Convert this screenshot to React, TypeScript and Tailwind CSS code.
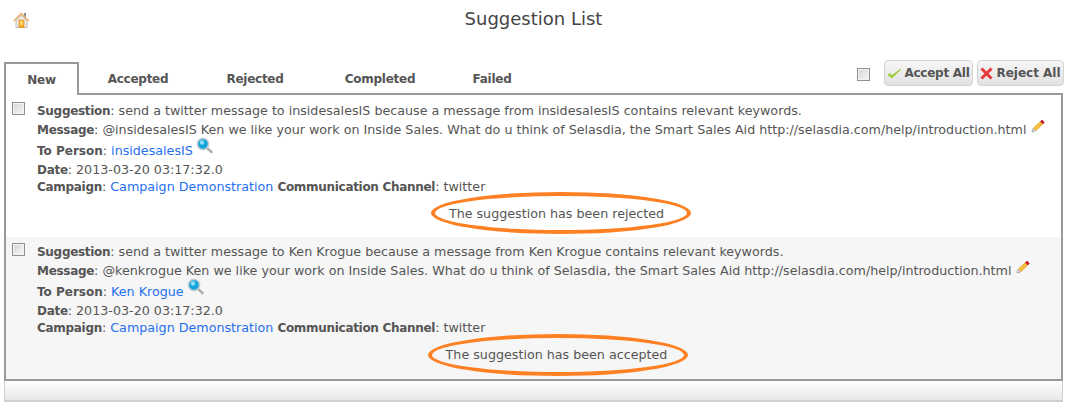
import type { ReactNode } from "react";

function HomeIcon() {
  return (
    <svg width="17" height="17" viewBox="0 0 17 17">
      <rect x="11" y="1" width="2" height="5" fill="#8c8c8c" />
      <path d="M3 8.5 V15.5 H14 V8.5 L8.5 3.5 Z" fill="#eeeeee" stroke="#b9b9b9" />
      <path d="M0.8 9 L8.3 1.6 L16 9" fill="none" stroke="#e8b26a" strokeWidth="1.5" />
      <rect x="6" y="8" width="5" height="7.5" fill="#f5a623" stroke="#e8a33a" />
      <rect x="7" y="9" width="3" height="4" fill="#fdd86a" />
    </svg>
  );
}

function SearchIcon() {
  return (
    <svg width="17" height="17" viewBox="0 0 17 17">
      <path d="M10.5 10.5 L15.5 15" stroke="#b0b0b0" strokeWidth="2.6" strokeLinecap="round" />
      <circle cx="7" cy="7" r="5.6" fill="#12a5dc" stroke="#c4cdd2" strokeWidth="1.6" />
      <circle cx="6" cy="5.5" r="2.2" fill="#8fdcf5" />
    </svg>
  );
}

function PencilIcon() {
  return (
    <svg width="14" height="14" viewBox="0 0 14 14">
      <path d="M1 13 L2 9.5 L4.5 12 Z" fill="#eeeeee" stroke="#999999" strokeWidth="0.8" />
      <path d="M2.5 9 L9.5 2.5 L11.8 5 L5 11.5 Z" fill="#f6bf3c" stroke="#d99a22" strokeWidth="0.7" />
      <path d="M9.5 2.5 L11 1 L13.2 3.3 L11.8 5 Z" fill="#d8112a" stroke="#b00d20" strokeWidth="0.6" />
    </svg>
  );
}

function Box() {
  return (
    <span className="block h-[13px] w-[13px] border border-[#8f8f8f] bg-gradient-to-br from-[#d5d5d5] to-[#f8f8f8] shadow-[inset_0_0_0_1px_#f4f4f4]" />
  );
}

function Label({ children }: { children: ReactNode }) {
  return <b className="text-[12px] font-bold tracking-[-0.3px] text-[#555]">{children}</b>;
}

function A({ children }: { children: ReactNode }) {
  return <span className="text-[#1f6fef]">{children}</span>;
}

function Suggestion({
  person,
  handle,
  status,
  shaded,
  ringClass,
}: {
  person: string;
  handle: string;
  status: string;
  shaded?: boolean;
  ringClass: string;
}) {
  return (
    <div className={`flex gap-[12px] pl-[6px] pt-[6px] ${shaded ? "flex-1 bg-[#f6f6f6]" : "h-[141px] bg-white"}`}>
      <div>
        <Box />
      </div>
      <div className="min-w-0 flex-1 text-[12.7px]">
        <div className="h-[18px] leading-[17px]">
          <Label>Suggestion</Label>: send a twitter message to {person} because a message from {person} contains relevant keywords.
        </div>
        <div className="flex h-[21px] items-start leading-[19px]">
          <span>
            <Label>Message</Label>: @{handle} Ken we like your work on Inside Sales. What do u think of Selasdia, the Smart Sales Aid http://selasdia.com/help/introduction.html
          </span>
          <span className="ml-[5px] mt-[-1px]">
            <PencilIcon />
          </span>
        </div>
        <div className="flex h-[19px] items-start leading-[19px]">
          <span>
            <b className="text-[12px] font-bold text-[#555]">To Person</b>: <A>{person}</A>
          </span>
          <span className="ml-[3px] mt-[-4px]">
            <SearchIcon />
          </span>
        </div>
        <div className="h-[18px] leading-[19px]">
          <Label>Date</Label>: 2013-03-20 03:17:32.0
        </div>
        <div className="h-[18px] leading-[17px]">
          <Label>Campaign</Label>: <A>Campaign Demonstration</A> <Label>Communication Channel</Label>: twitter
        </div>
        <div className="relative mt-[8px] h-[20px] pl-[15px] text-center leading-[20px]">
          {status}
          <span className={`absolute rounded-[50%] border-[4px] border-[#ff8022] ${ringClass}`} />
        </div>
      </div>
    </div>
  );
}

export default function App() {
  return (
    <div className="h-[408px] w-[1067px] overflow-hidden bg-white font-['DejaVu_Sans','Verdana',sans-serif] text-[12px] text-[#555]">
      <div className="relative flex h-[62px] justify-center pt-[9px]">
        <span className="absolute left-[13px] top-[12px]">
          <HomeIcon />
        </span>
        <h1 className="text-[18px] leading-[20px] text-[#444]">Suggestion List</h1>
      </div>

      <div className="mx-[4px] flex h-[33px] items-stretch">
        <div className="flex h-[33px] w-[75px] items-center justify-center border-2 border-b-0 border-[#999] pt-[1px] text-[12px] font-bold tracking-[-0.25px]">
          New
        </div>
        <div className="flex flex-1 border-b-[2px] border-[#999] font-bold tracking-[-0.25px]">
          <div className="flex h-[31px] w-[118px] items-center justify-center pt-[2px]">Accepted</div>
          <div className="ml-[-1px] flex h-[31px] w-[118px] items-center justify-center pt-[2px]">Rejected</div>
          <div className="flex h-[31px] w-[132px] items-center justify-center pt-[2px]">Completed</div>
          <div className="flex h-[31px] w-[92px] items-center justify-center pt-[2px]">Failed</div>
          <div className="ml-auto mr-[-1px] mt-[-2px] flex h-[26px] items-center">
            <span className="mt-[2px]">
              <Box />
            </span>
            <button className="ml-[14px] flex h-[26px] w-[89px] items-center justify-center gap-[2px] rounded-[4px] border border-[#d4d4d4] bg-gradient-to-b from-[#f6f6f6] to-[#e2e2e2] text-[12px] font-bold text-[#555]">
              <svg width="15" height="14" viewBox="0 0 15 14">
                <path d="M1 9 L5 12 L14 3 L5 9.5 L3 7.5 Z" fill="#a8d64a" stroke="#9ccb3b" strokeWidth="1" />
              </svg>
              Accept All
            </button>
            <button className="ml-[4px] flex h-[26px] w-[87px] items-center justify-center gap-[3px] rounded-[4px] border border-[#d4d4d4] bg-gradient-to-b from-[#f6f6f6] to-[#e2e2e2] text-[12px] font-bold tracking-normal text-[#555]">
              <svg width="13" height="13" viewBox="0 0 13 13">
                <path d="M1.5 1.5 L11.5 11.5 M11.5 1.5 L1.5 11.5" stroke="#e8393a" strokeWidth="3" />
              </svg>
              Reject All
            </button>
          </div>
        </div>
      </div>

      <div className="mx-[4px] flex h-[286px] flex-col border-x-2 border-b-2 border-[#999] pt-[1px]">
        <Suggestion
          person="insidesalesIS"
          handle="insidesalesIS"
          status="The suggestion has been rejected"
          ringClass="left-[394px] top-[-12px] h-[42px] w-[260px]"
        />
        <Suggestion
          shaded
          person="Ken Krogue"
          handle="kenkrogue"
          status="The suggestion has been accepted"
          ringClass="left-[391px] top-[-11px] h-[42px] w-[260px]"
        />
      </div>

      <div className="mx-[4px] h-[21px] border-x border-b-2 border-[#cfcfcf] bg-gradient-to-b from-white to-[#e8e8e8]" />
    </div>
  );
}
